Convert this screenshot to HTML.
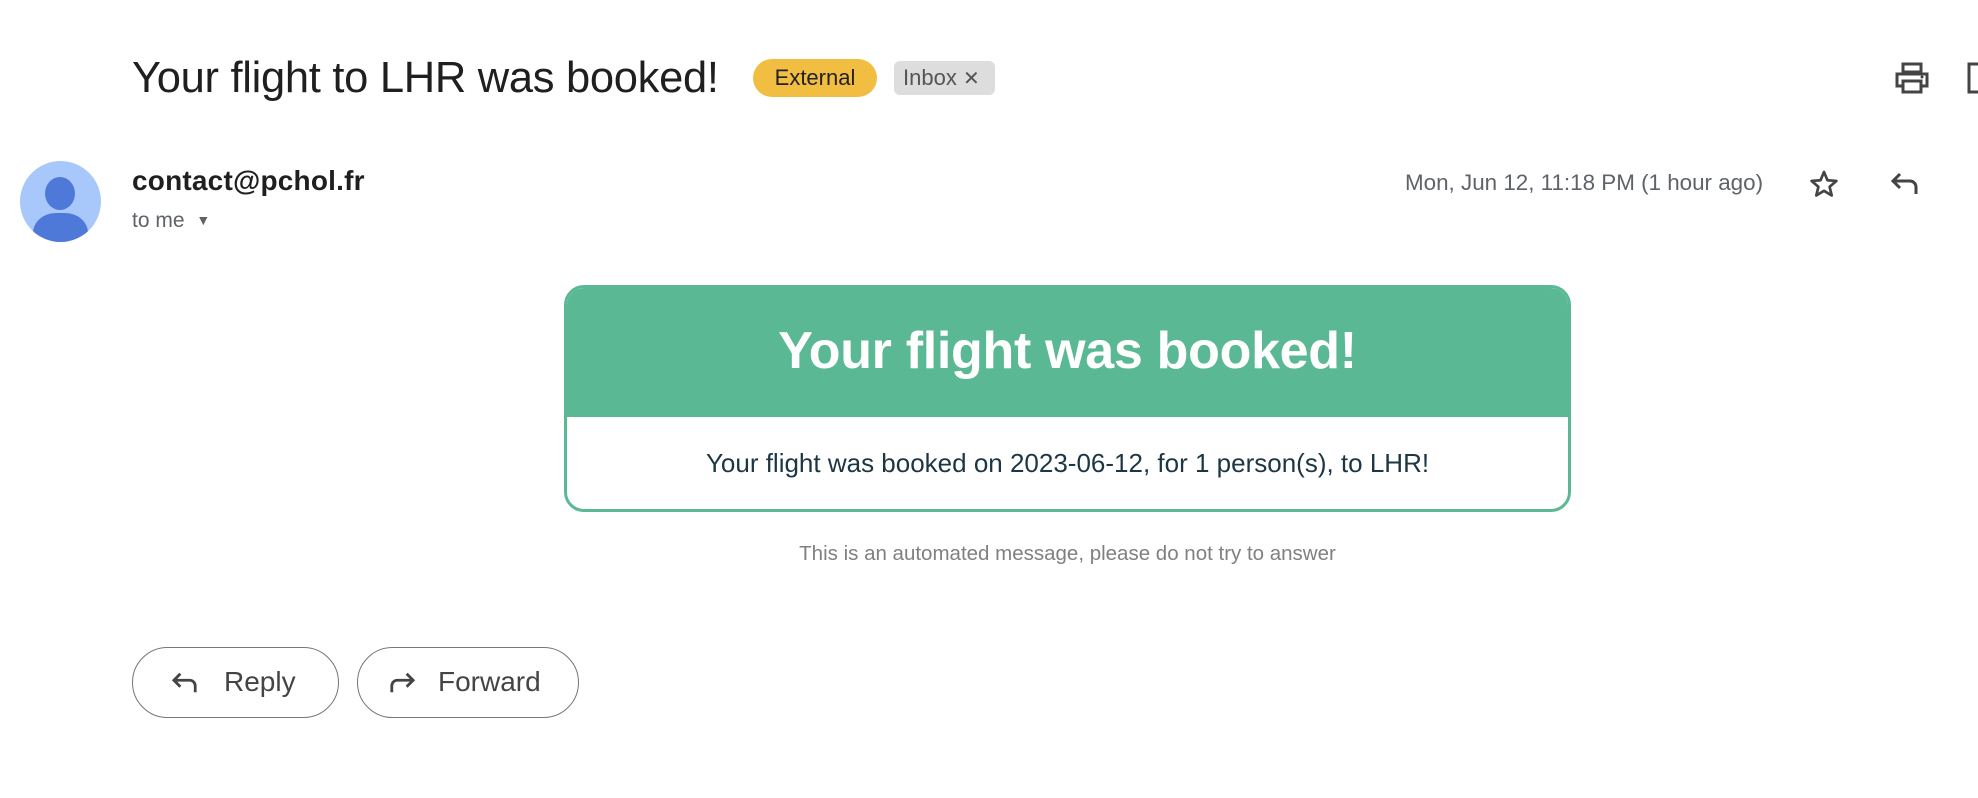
<!DOCTYPE html>
<html><head><meta charset="utf-8"><style>
*{margin:0;padding:0;box-sizing:border-box}
body{width:1978px;height:798px;background:#fff;font-family:"Liberation Sans",Arial,sans-serif;position:relative;overflow:hidden;color:#1f1f1f}
.a{position:absolute}
.title{left:132px;top:54px;font-size:43.5px;color:#1f1f1f;white-space:nowrap;letter-spacing:-0.3px}
.ext{left:753px;top:59px;width:124px;height:38px;border-radius:19px;background:#f2be42;font-size:22px;line-height:38px;text-align:center;color:#222}
.inbox{left:894px;top:61px;width:101px;height:34px;border-radius:6px;background:#ddd;font-size:22px;line-height:34px;color:#555;padding-left:9px}
.avatar{left:20px;top:161px;width:81px;height:81px;border-radius:50%;background:#a8c7fa;overflow:hidden}
.sender{left:132px;top:165px;font-size:28px;font-weight:bold;color:#1f1f1f;letter-spacing:0.2px}
.tome{left:132px;top:209px;font-size:21px;color:#5f6368}
.date{left:1405px;top:170px;font-size:22.4px;color:#5f6368;white-space:nowrap}
.card{left:564px;top:285px;width:1007px;height:227px;border:3px solid #5ab994;border-radius:20px;overflow:hidden}
.hd{height:129px;background:#5ab994;color:#fff;font-weight:bold;font-size:52px;text-align:center;line-height:126px;letter-spacing:-0.3px}
.bd{text-align:center;font-size:26px;color:#1c3644;line-height:92px}
.foot{left:0;width:2135px;top:542px;text-align:center;font-size:20.5px;color:#808080}
.btn{top:647px;height:71px;border:1.5px solid #747775;border-radius:36px;font-size:28px;color:#444;line-height:68px}
</style></head><body>
<div class="a title">Your flight to LHR was booked!</div>
<div class="a ext">External</div>
<div class="a inbox">Inbox <span style="font-size:20px">✕</span></div>
<svg class="a" style="left:1894px;top:62px" width="36" height="32" viewBox="0 0 36 32"><g fill="none" stroke="#444" stroke-width="3"><rect x="9" y="2" width="18" height="8"/><path d="M9 24H3V12h30v12h-6"/><rect x="9" y="19" width="18" height="11"/></g><circle cx="28" cy="15" r="1.5" fill="#444"/></svg>
<svg class="a" style="left:1966px;top:62px" width="12" height="32"><path d="M12 2H3v28h9" fill="none" stroke="#444" stroke-width="3"/></svg>
<div class="a avatar"><div class="a" style="left:25px;top:16px;width:30px;height:33px;border-radius:50%;background:#4f79d9"></div><div class="a" style="left:13px;top:52px;width:55px;height:40px;border-radius:50%/60%;background:#4f79d9"></div></div>
<div class="a sender">contact@pchol.fr</div>
<div class="a tome">to me <span style="font-size:14px;position:relative;top:-2px;left:6px">▼</span></div>
<div class="a date">Mon, Jun 12, 11:18 PM (1 hour ago)</div>
<svg class="a" style="left:1808px;top:168px" width="32" height="32" viewBox="0 0 24 24"><path d="M12 3l2.6 6.2 6.7.5-5.1 4.4 1.6 6.5L12 17.1l-5.8 3.5 1.6-6.5L2.7 9.7l6.7-.5z" fill="none" stroke="#444" stroke-width="2" stroke-linejoin="round"/></svg>
<svg class="a" style="left:1890px;top:170px" width="30" height="28" viewBox="0 0 30 28"><path d="M10 4L3 11l7 7M3 11h17a6 6 0 0 1 6 6v7" fill="none" stroke="#444" stroke-width="3"/></svg>
<div class="a card"><div class="hd">Your flight was booked!</div><div class="bd">Your flight was booked on 2023-06-12, for 1 person(s), to LHR!</div></div>
<div class="a foot">This is an automated message, please do not try to answer</div>
<div class="a btn" style="left:132px;width:207px"><svg class="a" style="left:37px;top:22px" width="30" height="26" viewBox="0 0 30 28"><path d="M10 4L3 11l7 7M3 11h17a6 6 0 0 1 6 6v7" fill="none" stroke="#444" stroke-width="3"/></svg><span class="a" style="left:91px">Reply</span></div>
<div class="a btn" style="left:357px;width:222px"><svg class="a" style="left:29px;top:22px" width="30" height="26" viewBox="0 0 30 28"><path d="M20 4l7 7-7 7M27 11H10a6 6 0 0 0-6 6v7" fill="none" stroke="#444" stroke-width="3"/></svg><span class="a" style="left:80px">Forward</span></div>
</body></html>
